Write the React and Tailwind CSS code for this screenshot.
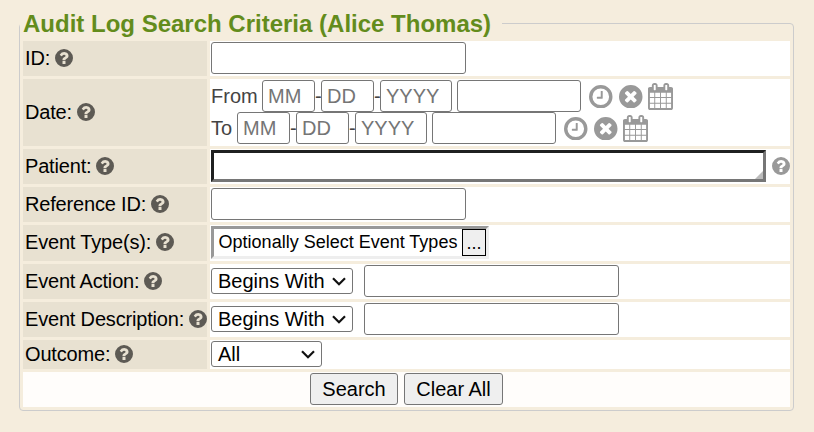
import React from "react";

const RING = "M1664 896a768 768 0 1 1-1536 0a768 768 0 1 1 1536 0z";
const QUESTION =
  "M1024 1376v-192q0-14-9-23t-23-9h-192q-14 0-23 9t-9 23v192q0 14 9 23t23 9h192q14 0 23-9t9-23zm256-672q0-88-55.500-163t-138.500-116-170-41q-243 0-371 213-15 24 8 42l132 100q7 6 19 6 16 0 25-12 53-68 86-92 34-24 86-24 48 0 85.500 26t37.500 59q0 38-20 61t-68 45q-63 28-115.500 86.500t-52.500 125.500v36q0 14 9 23t23 9h192q14 0 23-9t9-23q0-19 21.500-49.500t54.500-49.500q32-18 49-28.500t46-35 44.500-48 28-60.500 12.500-81z";
const TIMES =
  "M1277 1122q0-26-19-45l-181-181 181-181q19-19 19-45 0-27-19-46l-90-90q-19-19-46-19-26 0-45 19l-181 181-181-181q-19-19-45-19-27 0-46 19l-90 90q-19 19-19 46 0 26 19 45l181 181-181 181q-19 19-19 45 0 27 19 46l90 90q19 19 46 19 26 0 45-19l181-181 181 181q19 19 45 19 27 0 46-19l90-90q19-19 19-46z";
const CLOCK =
  "M1024 544v448q0 14-9 23t-23 9h-320q-14 0-23-9t-9-23v-64q0-14 9-23t23-9h224v-352q0-14 9-23t23-9h64q14 0 23 9t9 23z";
const CALENDAR =
  "M192 1664h288v-288h-288v288zm352 0h320v-288h-320v288zm-352-352h288v-320h-288v320zm352 0h320v-320h-320v320zm-352-384h288v-288h-288v288zm736 736h320v-288h-320v288zm-384-736h320v-288h-320v288zm768 736h288v-288h-288v288zm-384-352h320v-320h-320v320zm-352-864v-288q0-13-9.500-22.500t-22.500-9.500h-64q-13 0-22.500 9.500t-9.500 22.500v288q0 13 9.500 22.500t22.500 9.500h64q13 0 22.500-9.500t9.500-22.500zm736 864h288v-320h-288v320zm-384-384h320v-288h-320v288zm384 0h288v-288h-288v288zm32-480v-288q0-13-9.500-22.500t-22.500-9.500h-64q-13 0-22.500 9.500t-9.500 22.500v288q0 13 9.500 22.500t22.500 9.500h64q13 0 22.500-9.500t9.500-22.500zm384-64v1280q0 52-38 90t-90 38h-1408q-52 0-90-38t-38-90v-1280q0-52 38-90t90-38h128v-96q0-66 47-113t113-47h64q66 0 113 47t47 113v96h384v-96q0-66 47-113t113-47h64q66 0 113 47t47 113v96h128q52 0 90 38t38 90z";

function Help({ className = "text-[#5d5a54]" }) {
  return (
    <svg viewBox="128 128 1536 1536" className={`size-[18px] shrink-0 ${className}`} fill="currentColor" fillRule="evenodd">
      <path d={RING + QUESTION} />
    </svg>
  );
}

function DateIcons() {
  return (
    <div className="ml-2 flex items-center pt-px text-[#999]">
      <svg viewBox="128 128 1536 1536" className="size-[23.5px]" fill="currentColor" fillRule="evenodd">
        <path d={RING + "M1440 896a544 544 0 1 0-1088 0a544 544 0 1 0 1088 0z"} />
        <path d={CLOCK} />
      </svg>
      <svg viewBox="128 128 1536 1536" className="ml-[6.5px] size-[23.5px]" fill="currentColor" fillRule="evenodd">
        <path d={RING + TIMES} />
      </svg>
      <svg viewBox="64 0 1664 1792" className="ml-[5px] h-[27px] w-[25px]" fill="currentColor">
        <path d={CALENDAR} />
      </svg>
    </div>
  );
}

const field = "h-8 rounded-[3px] border border-[#767676] bg-white outline-none placeholder:text-[#757575] placeholder:opacity-100";

function DateRow({ label, labelWidth }) {
  return (
    <div className="flex h-8 items-center text-[#444]">
      <span className={labelWidth}>{label}</span>
      <input className={`${field} w-[53px] px-[5px]`} placeholder="MM" />
      <span className="w-1.5">-</span>
      <input className={`${field} w-[53px] px-[5px]`} placeholder="DD" />
      <span className="w-1.5">-</span>
      <input className={`${field} w-[72px] px-[5px]`} placeholder="YYYY" />
      <input className={`${field} ml-[5px] w-[124px]`} />
      <DateIcons />
    </div>
  );
}

function Select({ value, className }) {
  return (
    <button type="button" className={`flex h-[26px] items-center justify-between rounded-[3px] border border-[#767676] bg-white pr-[6px] pl-[6px] text-left ${className}`}>
      <span>{value}</span>
      <svg viewBox="0 0 14 9" className="h-[9px] w-[14px]" fill="none" stroke="#111" strokeWidth="2.2">
        <path d="M1 1.200l6 6 6-6" />
      </svg>
    </button>
  );
}

function Row({ label, height, children }) {
  return (
    <div className={`flex gap-[3px] ${height}`}>
      <div className="flex w-[184px] shrink-0 items-center gap-[5px] bg-[#e8e1d1] pb-[2px] pl-0.5 whitespace-nowrap">
        <span className="tracking-[-0.18px]">{label}</span>
        <Help />
      </div>
      <div className="flex min-w-0 flex-1 bg-white pt-px pl-px">{children}</div>
    </div>
  );
}

export default function App() {
  return (
    <div className="h-[432px] w-[814px] overflow-hidden bg-[#f5eddd] pt-[9px] pl-[19px] font-['Liberation_Sans',Arial,sans-serif] text-[20px] leading-6 text-black">
      <fieldset className="h-[402px] w-[775px] rounded-[4px] border border-[#ccc] px-[3px]">
        <legend className="-ml-[3px] h-7 pt-px pr-[11px] pl-[3px] text-[24px] leading-7 font-bold text-[#638c1c]">
          Audit Log Search Criteria (Alice Thomas)
        </legend>
        <div className="mt-1 flex flex-col gap-[3px]">
          <Row label="ID:" height="h-[35px]">
            <input className={`${field} w-[255px]`} />
          </Row>
          <Row label="Date:" height="h-[67px]">
            <div>
              <DateRow label="From" labelWidth="w-[51px]" />
              <DateRow label="To" labelWidth="w-[26px]" />
            </div>
          </Row>
          <Row label="Patient:" height="h-[35px]">
            <div className="flex h-8 w-[555px] items-end justify-end border-[3px] border-t-[#1f2020] border-r-[#767676] border-b-[#767676] border-l-[#1f2020] bg-white">
              <svg viewBox="0 0 8 8" className="size-2" fill="#bbb">
                <path d="M8 0v8H0z" />
              </svg>
            </div>
            <Help className="mt-[6.5px] ml-[5.5px] text-[#999]" />
          </Row>
          <Row label="Reference ID:" height="h-[35px]">
            <input className={`${field} w-[255px]`} />
          </Row>
          <Row label="Event Type(s):" height="h-[36px]">
            <div className="flex h-[33px] w-[278px] justify-between border-[3px] border-t-[#999] border-r-[#eee] border-b-[#eee] border-l-[#999] bg-white text-[18px]">
              <span className="pl-[4.6px] leading-[26px] whitespace-nowrap">Optionally Select Event Types</span>
              <button type="button" className="h-[27px] w-6 border border-black bg-[#efefef] leading-6">...</button>
            </div>
          </Row>
          <Row label="Event Action:" height="h-[35px]">
            <Select value="Begins With" className="mt-[3px] w-[142px]" />
            <input className={`${field} ml-[11px] w-[255px]`} />
          </Row>
          <Row label="Event Description:" height="h-[35px]">
            <Select value="Begins With" className="mt-[3px] w-[142px]" />
            <input className={`${field} ml-[11px] w-[255px]`} />
          </Row>
          <Row label="Outcome:" height="h-[29px]">
            <Select value="All" className="w-[111px]" />
          </Row>
          <div className="flex h-[35px] gap-1.5 bg-[#fffdfb] pt-px pl-[287px]">
            <button type="button" className="h-8 w-[88px] rounded-[3px] border border-[#767676] bg-[#efefef]">Search</button>
            <button type="button" className="h-8 w-[99px] rounded-[3px] border border-[#767676] bg-[#efefef]">Clear All</button>
          </div>
        </div>
      </fieldset>
    </div>
  );
}
